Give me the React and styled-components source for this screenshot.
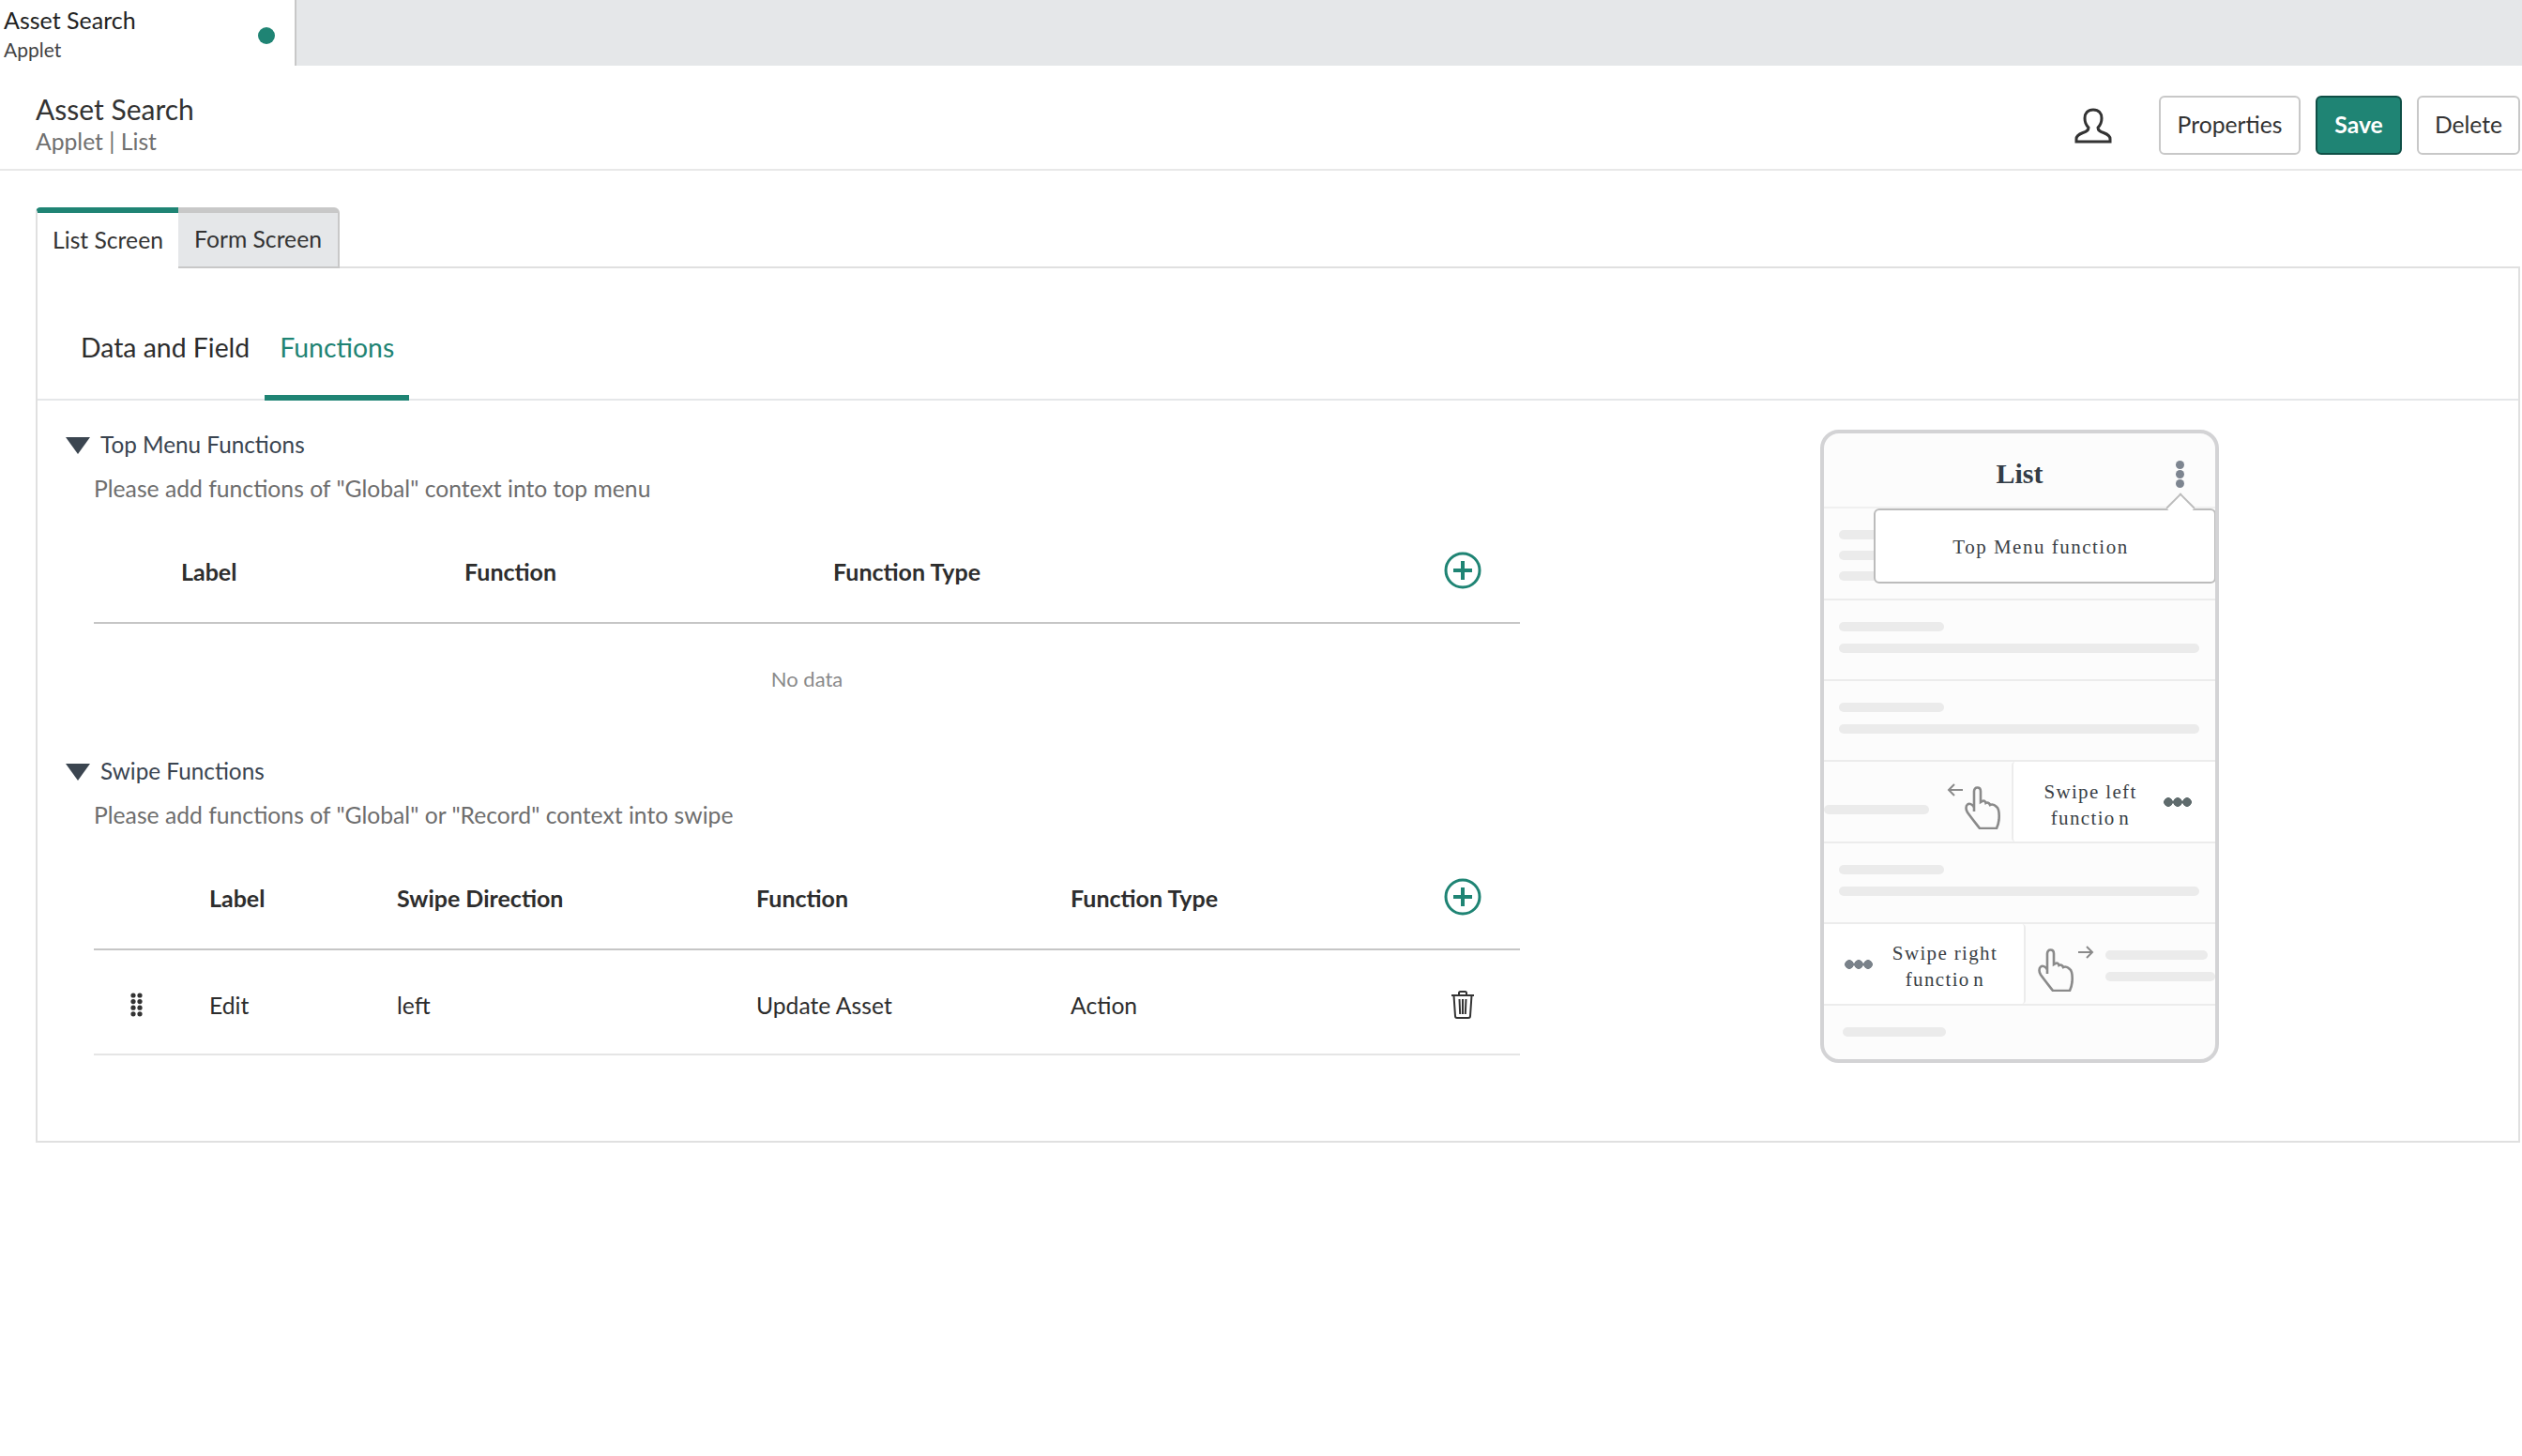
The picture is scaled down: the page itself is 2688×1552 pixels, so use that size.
import React from "react";
import styled, { createGlobalStyle } from "styled-components";

const GREEN = "#1f8474";
const FONT = `Lato, "Noto Sans", "Liberation Sans", sans-serif`;
const SERIF = `"Liberation Serif", "Times New Roman", serif`;

function HandIcon() {
  return (
    <HandSvg viewBox="0 0 38 46" fill="none">
      <path d="M10 27 V5.5 C10 3 11.5 1.5 13.5 1.5 S17 3 17 5.5 V17 L19 15.8 C20.5 15 22 16 22.5 18 C24 17 26 17.5 27 20 C29 19 32 20 34 22 C36.5 24 37 30 36.5 36 C36 40 35 43 34 45 H16 C13 41 8 35 3 28 C1 25 1 21 3 19.5 C5 18 8 19 10 22.5" />
    </HandSvg>
  );
}

function ArrowIcon({ flip }) {
  return (
    <ArrowSvg viewBox="0 0 17 14" fill="none" $flip={flip}>
      <path d="M17 7 H2 M8 1 L2 7 L8 13" />
    </ArrowSvg>
  );
}

function AddIcon() {
  return (
    <AddSvg viewBox="0 0 40 40" fill="none">
      <circle cx="20" cy="20" r="18" strokeWidth="3" />
      <path d="M20 10 V30 M10 20 H30" strokeWidth="4" />
    </AddSvg>
  );
}

function UserIcon() {
  return (
    <UserSvg viewBox="0 0 40 38" fill="none">
      <path d="M20 2 C14 2 11 6 11 11 C11 16 13 19 15 21 C15 24 13 25 9 26.5 C5 28 2 30 2 33 V36 H38 V33 C38 30 35 28 31 26.5 C27 25 25 24 25 21 C27 19 29 16 29 11 C29 6 26 2 20 2 Z" />
    </UserSvg>
  );
}

function TrashIcon() {
  return (
    <TrashSvg viewBox="0 0 26 30" fill="none">
      <path d="M1 5 H25 M9 5 V2.5 Q9 1 10.5 1 H15.5 Q17 1 17 2.5 V5 M3.5 5 L5 27 Q5 29 7 29 H19 Q21 29 21 27 L22.5 5 M9.5 9 L10.2 25 M13 9 V25 M16.5 9 L15.8 25" />
    </TrashSvg>
  );
}

function DragIcon() {
  const dots = [];
  for (let row = 0; row < 4; row++) {
    dots.push(<circle key={`a${row}`} cx="3" cy={3 + row * 6.6} r="2.6" />);
    dots.push(<circle key={`b${row}`} cx="10" cy={3 + row * 6.6} r="2.6" />);
  }
  return (
    <DragSvg viewBox="0 0 13 26" fill="#333">
      {dots}
    </DragSvg>
  );
}

function SwipeText({ first }) {
  return (
    <SwipeLabel>
      {first}
      <br />
      functi<SpacedLetter>o</SpacedLetter>n
    </SwipeLabel>
  );
}

function SkeletonRow() {
  return (
    <MockRow $h={86} $pad="23px 17px 0 16px">
      <Bar $w={112} />
      <Bar />
    </MockRow>
  );
}

function PhonePreview() {
  return (
    <Phone>
      <PhoneHeader>
        <span />
        <PhoneTitle>List</PhoneTitle>
        <Kebab>
          <MockDot $c="#7d8590" />
          <MockDot $c="#7d8590" />
          <MockDot $c="#7d8590" />
        </Kebab>
      </PhoneHeader>
      <MockRow $h={98} $pad="23px 17px 0 16px" $gap={12}>
        <Bar $w={100} />
        <Bar $w={100} />
        <Bar $w={100} />
      </MockRow>
      <SkeletonRow />
      <SkeletonRow />
      <SwipeRow>
        <SwipeRest>
          <Bar $w={112} $top={46} />
          <ArrowWrap $top={23} $left={19}>
            <ArrowIcon />
          </ArrowWrap>
          <ArrowWrap $top={26} $left={2}>
            <HandIcon />
          </ArrowWrap>
        </SwipeRest>
        <SwipePanel $side="left">
          <SwipeLabelWrap $left={12}>
            <SwipeText first="Swipe left" />
          </SwipeLabelWrap>
          <MockDots $c="#5f6b6d" $left={8} />
        </SwipePanel>
      </SwipeRow>
      <SkeletonRow />
      <SwipeRow>
        <SwipePanel $side="right">
          <MockDots $c="#7a828a" $left={22} />
          <SwipeLabelWrap $left={7} $top={5}>
            <SwipeText first="Swipe right" />
          </SwipeLabelWrap>
        </SwipePanel>
        <SwipeRest $left={13}>
          <ArrowWrap $top={26}>
            <HandIcon />
          </ArrowWrap>
          <ArrowWrap $top={23} $left={5}>
            <ArrowIcon flip />
          </ArrowWrap>
          <BarStack>
            <Bar $w={109} />
            <Bar $w={117} />
          </BarStack>
        </SwipeRest>
      </SwipeRow>
      <MockRow $h={57} $pad="23px 0 0 20px" $last>
        <Bar $w={110} />
      </MockRow>
      <Popup>Top Menu function</Popup>
    </Phone>
  );
}

export default function App() {
  return (
    <Page>
      <GlobalStyle />
      <TopBar>
        <AppTab>
          <div>
            <AppTabTitle>Asset Search</AppTabTitle>
            <AppTabSub>Applet</AppTabSub>
          </div>
          <StatusDot />
        </AppTab>
      </TopBar>

      <Header>
        <div>
          <Title>Asset Search</Title>
          <Subtitle>Applet | List</Subtitle>
        </div>
        <Actions>
          <UserIcon />
          <Button $w={151}>Properties</Button>
          <Button $w={92} $primary>
            Save
          </Button>
          <Button $w={110}>Delete</Button>
        </Actions>
      </Header>

      <ScreenTabs>
        <ScreenTab $active $w={152}>
          List Screen
        </ScreenTab>
        <ScreenTab $w={172}>Form Screen</ScreenTab>
      </ScreenTabs>

      <Panel>
        <SubNav>
          <SubNavItem>Data and Field</SubNavItem>
          <SubNavItem $active>Functions</SubNavItem>
        </SubNav>

        <Content>
          <Sections>
            <SectionTitle>
              <Caret />
              Top Menu Functions
            </SectionTitle>
            <SectionDesc>
              Please add functions of "Global" context into top menu
            </SectionDesc>
            <HeadRow $cols="93px 302px 393px 610px 122px">
              <span />
              <span>Label</span>
              <span>Function</span>
              <span>Function Type</span>
              <AddIcon />
            </HeadRow>
            <NoData>No data</NoData>

            <SectionTitle>
              <Caret />
              Swipe Functions
            </SectionTitle>
            <SectionDesc>
              Please add functions of "Global" or "Record" context into swipe
            </SectionDesc>
            <HeadRow $cols="123px 200px 383px 335px 357px 122px">
              <span />
              <span>Label</span>
              <span>Swipe Direction</span>
              <span>Function</span>
              <span>Function Type</span>
              <AddIcon />
            </HeadRow>
            <BodyRow $cols="123px 200px 383px 335px 357px 122px">
              <DragCell>
                <DragIcon />
              </DragCell>
              <span>Edit</span>
              <span>left</span>
              <span>Update Asset</span>
              <span>Action</span>
              <TrashIcon />
            </BodyRow>
          </Sections>
          <PhonePreview />
        </Content>
      </Panel>
    </Page>
  );
}

const GlobalStyle = createGlobalStyle`
  html, body {
    margin: 0;
    padding: 0;
    background: #fff;
  }
  * {
    box-sizing: border-box;
  }
`;

const Page = styled.div`
  width: 2688px;
  height: 1552px;
  overflow: hidden;
  background: #fff;
  font-family: ${FONT};
  font-size: 24.7px;
  color: #2d2d2d;
`;

const TopBar = styled.div`
  height: 70px;
  background: #e5e7e9;
  display: flex;
`;

const AppTab = styled.div`
  width: 316px;
  height: 70px;
  padding: 4px 21px 0 4px;
  background: #fff;
  border-right: 2px solid #c8c8c8;
  display: flex;
  justify-content: space-between;
`;

const AppTabTitle = styled.div`
  font-size: 25px;
  line-height: 34px;
  color: #222;
`;

const AppTabSub = styled.div`
  margin-top: 2px;
  font-size: 21px;
  line-height: 26px;
  color: #444;
`;

const StatusDot = styled.div`
  width: 18px;
  height: 18px;
  margin-top: 25px;
  border-radius: 50%;
  background: ${GREEN};
`;

const Header = styled.div`
  height: 112px;
  padding: 0 2px 0 38px;
  border-bottom: 2px solid #e8e8e8;
  display: flex;
  justify-content: space-between;
`;

const Title = styled.div`
  margin-top: 27px;
  font-size: 30px;
  line-height: 38px;
  color: #333;
`;

const Subtitle = styled.div`
  margin-top: -1px;
  font-size: 24.7px;
  line-height: 34px;
  color: #707070;
`;

const Actions = styled.div`
  padding-top: 32px;
  display: flex;
  align-items: flex-start;
  gap: 16px;
`;

const UserSvg = styled.svg`
  width: 40px;
  height: 38px;
  margin: 13px 34px 0 0;
  stroke: #333;
  stroke-width: 3;
`;

const Button = styled.div`
  width: ${({ $w }) => $w}px;
  height: 63px;
  padding-bottom: 2px;
  border-radius: 6px;
  border: 2px solid ${({ $primary }) => ($primary ? "#0f4f46" : "#c8c8c8")};
  background: ${({ $primary }) => ($primary ? GREEN : "#fff")};
  color: ${({ $primary }) => ($primary ? "#fff" : "#333")};
  font-weight: ${({ $primary }) => ($primary ? 700 : 400)};
  display: flex;
  align-items: center;
  justify-content: center;
`;

const ScreenTabs = styled.div`
  display: flex;
  margin: 39px 0 -2px 38px;
  position: relative;
`;

const ScreenTab = styled.div`
  width: ${({ $w }) => $w}px;
  height: 65px;
  padding-bottom: 2px;
  display: flex;
  align-items: center;
  justify-content: center;
  color: #333;
  border-top: 6px solid ${({ $active }) => ($active ? GREEN : "#c8c8c8")};
  border-left: ${({ $active }) => ($active ? "2px solid #e0e0e0" : "none")};
  border-right: ${({ $active }) => ($active ? "none" : "2px solid #c8c8c8")};
  border-bottom: ${({ $active }) => ($active ? "none" : "2px solid #c8c8c8")};
  background: ${({ $active }) => ($active ? "#fff" : "#e5e7e9")};
  border-radius: ${({ $active }) => ($active ? "5px 0 0 0" : "0 6px 0 0")};
`;

const Panel = styled.div`
  margin: 0 2px 0 38px;
  height: 934px;
  border: 2px solid #e0e0e0;
`;

const SubNav = styled.div`
  height: 141px;
  padding-left: 30px;
  border-bottom: 2px solid #e5e7e9;
  display: flex;
`;

const SubNavItem = styled.div`
  height: 141px;
  padding: 66px 16px 0;
  font-size: 28.4px;
  line-height: 36px;
  color: ${({ $active }) => ($active ? GREEN : "#2d2d2d")};
  border-bottom: 6px solid ${({ $active }) => ($active ? GREEN : "transparent")};
`;

const Content = styled.div`
  display: flex;
`;

const Sections = styled.div`
  width: 1580px;
  padding: 28px 0 0 60px;
`;

const SectionTitle = styled.div`
  display: flex;
  align-items: center;
  margin-left: -30px;
  height: 36px;
  font-size: 24.3px;
  color: #3a4450;
`;

const Caret = styled.div`
  width: 0;
  height: 0;
  margin: 4px 11px 0 0;
  border-left: 13px solid transparent;
  border-right: 13px solid transparent;
  border-top: 18px solid #3b4550;
`;

const SectionDesc = styled.div`
  margin-top: 12px;
  line-height: 36px;
  color: #6e6e6e;
`;

const HeadRow = styled.div`
  margin-top: 22px;
  height: 104px;
  padding-bottom: 6px;
  display: grid;
  grid-template-columns: ${({ $cols }) => $cols};
  align-items: center;
  font-size: 25px;
  font-weight: 700;
  color: #2d2d2d;
  border-bottom: 2px solid #c6c6c6;
`;

const AddSvg = styled.svg`
  width: 40px;
  height: 40px;
  justify-self: center;
  margin-bottom: 2px;
  stroke: ${GREEN};
`;

const NoData = styled.div`
  height: 138px;
  padding-top: 41px;
  line-height: 36px;
  text-align: center;
  font-size: 22px;
  color: #8a8a8a;
`;

const BodyRow = styled.div`
  height: 112px;
  padding-top: 6px;
  display: grid;
  grid-template-columns: ${({ $cols }) => $cols};
  align-items: center;
  border-bottom: 2px solid #e5e5e5;
`;

const DragCell = styled.div`
  padding-left: 39px;
  display: flex;
`;

const DragSvg = styled.svg`
  width: 13px;
  height: 26px;
`;

const TrashSvg = styled.svg`
  width: 26px;
  height: 30px;
  justify-self: center;
  stroke: #333;
  stroke-width: 2;
`;

const Phone = styled.div`
  position: relative;
  width: 425px;
  height: 675px;
  margin: 31px 0 0 320px;
  border: 4px solid #d3d3d5;
  border-radius: 20px;
  background: #fcfcfc;
  overflow: hidden;
`;

const PhoneHeader = styled.div`
  height: 80px;
  padding-top: 8px;
  display: grid;
  grid-template-columns: 1fr auto 1fr;
  align-items: center;
  border-bottom: 2px solid #f0f0f0;
`;

const PhoneTitle = styled.div`
  font-family: ${SERIF};
  font-weight: 700;
  font-size: 30px;
  color: #333c46;
`;

const Kebab = styled.div`
  justify-self: end;
  margin-right: 33px;
  display: flex;
  flex-direction: column;
  gap: 1px;
`;

const MockDot = styled.div`
  width: 9px;
  height: 9px;
  border-radius: 50%;
  background: ${({ $c }) => $c};
`;

const MockRow = styled.div`
  height: ${({ $h }) => $h}px;
  padding: ${({ $pad }) => $pad};
  display: flex;
  flex-direction: column;
  gap: ${({ $gap }) => $gap || 13}px;
  border-bottom: ${({ $last }) => ($last ? "none" : "2px solid #ececec")};
`;

const Bar = styled.div`
  flex: none;
  width: ${({ $w }) => ($w ? `${$w}px` : "100%")};
  height: 10px;
  margin-top: ${({ $top }) => $top || 0}px;
  border-radius: 5px;
  background: #ebebeb;
`;

const BarStack = styled.div`
  margin: 28px 0 0 12px;
  display: flex;
  flex-direction: column;
  gap: 13px;
`;

const SwipeRow = styled.div`
  height: 87px;
  display: flex;
  border-bottom: 2px solid #ececec;
`;

const SwipeRest = styled.div`
  flex: 1;
  min-width: 0;
  display: flex;
  align-items: flex-start;
  padding-left: ${({ $left }) => $left || 0}px;
  overflow: hidden;
`;

const ArrowWrap = styled.div`
  flex: none;
  display: flex;
  margin: ${({ $top }) => $top}px 0 0 ${({ $left }) => $left || 0}px;
`;

const HandSvg = styled.svg`
  width: 38px;
  height: 46px;
  stroke: #8a8a8a;
  stroke-width: 2.6;
`;

const ArrowSvg = styled.svg`
  width: 17px;
  height: 14px;
  stroke: #8a8a8a;
  stroke-width: 2;
  transform: ${({ $flip }) => ($flip ? "scaleX(-1)" : "none")};
`;

const SwipePanel = styled.div`
  flex: none;
  width: ${({ $side }) => ($side === "left" ? 217 : 215)}px;
  display: flex;
  align-items: center;
  background: #fff;
  border-${({ $side }) => ($side === "left" ? "left" : "right")}: 2px solid #ececec;
  border-radius: ${({ $side }) => ($side === "left" ? "4px 0 0 4px" : "0 4px 4px 0")};
`;

const SwipeLabelWrap = styled.div`
  margin: ${({ $top }) => $top || 6}px 0 0 ${({ $left }) => $left}px;
  width: 140px;
  flex: none;
`;

const SwipeLabel = styled.div`
  font-family: ${SERIF};
  font-size: 21px;
  line-height: 28px;
  letter-spacing: 1.35px;
  text-align: center;
  color: #3a3f46;
`;

const SpacedLetter = styled.span`
  letter-spacing: 5px;
`;

const MockDots = styled.div`
  flex: none;
  width: 30px;
  height: 10px;
  margin-left: ${({ $left }) => $left}px;
  background: radial-gradient(circle at 5px 5px, ${({ $c }) => $c} 4.6px, transparent 5px) 0 0 / 10px 10px repeat-x;
`;

const Popup = styled.div`
  position: absolute;
  left: 53px;
  right: -1px;
  top: 80px;
  height: 80px;
  display: flex;
  align-items: center;
  justify-content: center;
  padding: 2px 9px 0 0;
  background: #fff;
  border: 2px solid #bcbcbc;
  border-radius: 6px;
  font-family: ${SERIF};
  font-size: 21px;
  letter-spacing: 1.5px;
  color: #3a3f46;

  &::before {
    content: "";
    position: absolute;
    width: 20px;
    height: 20px;
    left: 314px;
    top: -14px;
    background: #fff;
    border-top: 2px solid #bcbcbc;
    border-left: 2px solid #bcbcbc;
    transform: rotate(45deg);
  }
`;
